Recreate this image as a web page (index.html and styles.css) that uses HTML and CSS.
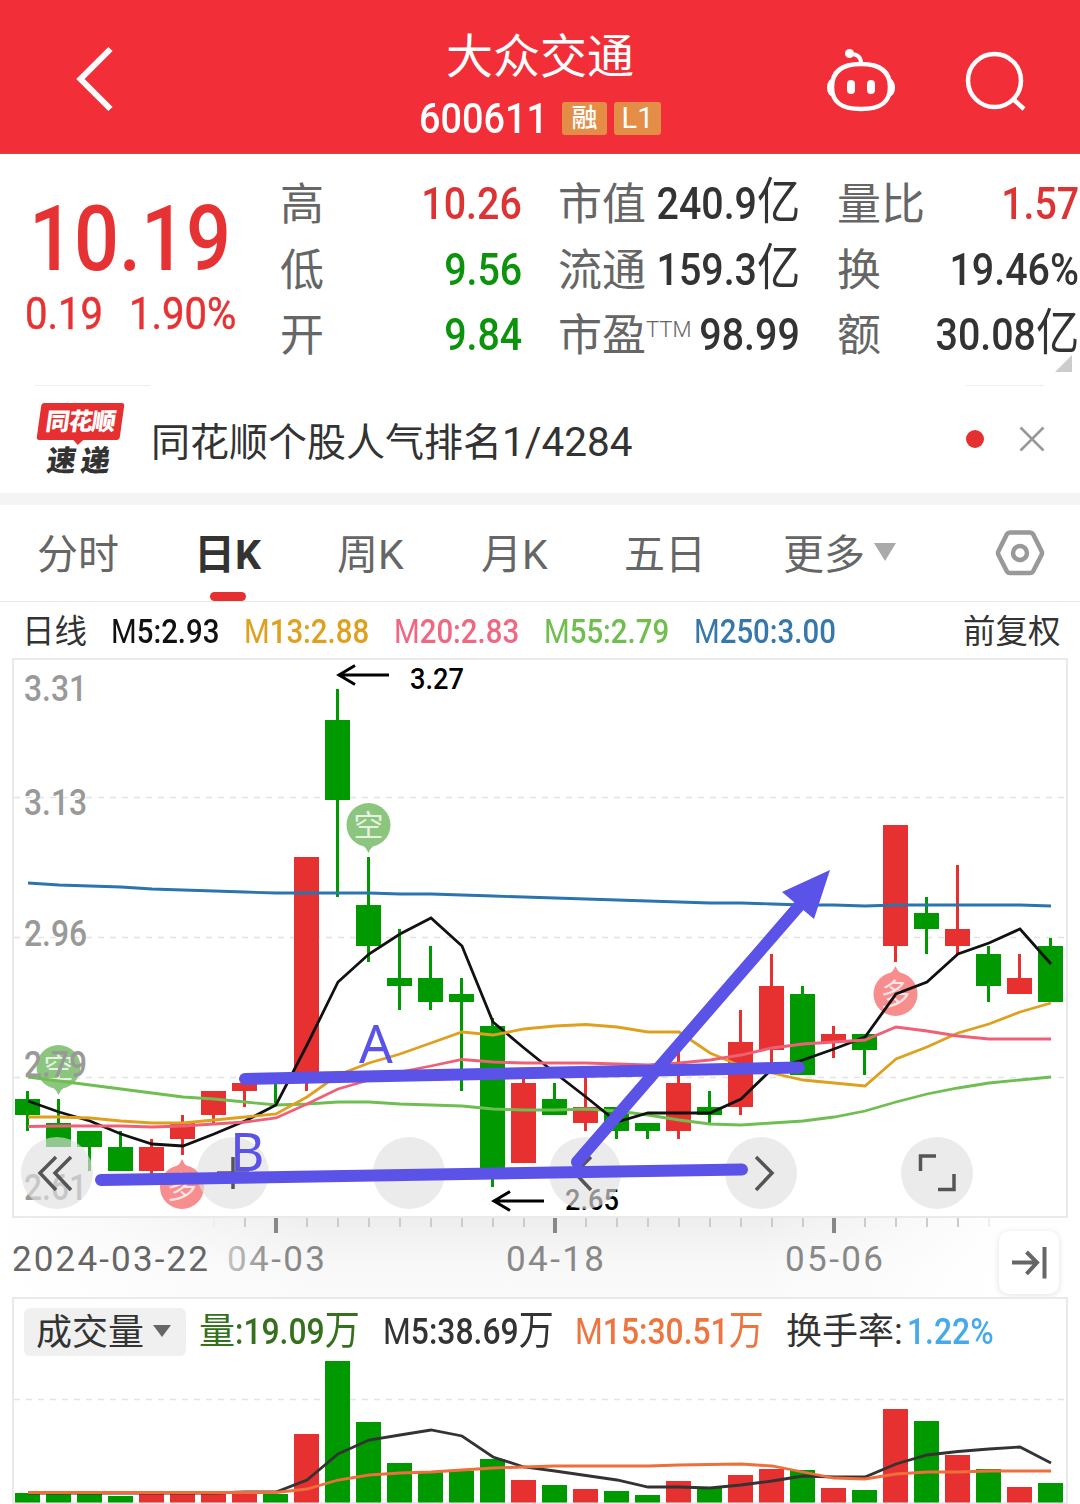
FILE: index.html
```
<!DOCTYPE html>
<html lang="zh-CN">
<head>
    <meta charset="utf-8" />
    <title>大众交通 600611</title>
    <meta name="viewport" content="width=1080">
    <link rel="stylesheet" href="styles.css">
</head>
<body>

<div class="main">
    <header class="header">
        <svg class="back" width="48" height="76" viewBox="70 40 48 76">
            <path d="M110.500 49L80.500 79L110.500 109" fill="none" stroke="#fff" stroke-width="6"/>
        </svg>
        <div class="header-title">
            <h1>大众交通</h1>
            <div class="header-code">
                <span class="code"><span class="num">600611</span></span>
                <span class="tag">融</span>
                <span class="tag tag-l1">L1</span>
            </div>
        </div>
        <div class="header-icons">
            <svg width="72" height="66" viewBox="825 47 72 66">
                <g fill="none" stroke="#fff" stroke-width="4.5">
                    <path d="M861 64C881 64 890 72 890 87C890 103 880 109 861 109C842 109 832 103 832 87C832 72 841 64 861 64Z"/>
                    <path d="M861 63C861 57 857 54 851 54" stroke-width="4"/>
                </g>
                <circle cx="849.500" cy="53.500" r="4.500" fill="#fff"/>
                <path d="M833 78Q827 80 827 87.500T833 97ZM889 78Q895 80 895 87.500T889 97Z" fill="#fff"/>
                <rect x="847" y="80" width="8" height="14" rx="4" fill="#fff"/>
                <rect x="867" y="80" width="8" height="14" rx="4" fill="#fff"/>
            </svg>
            <svg width="64" height="64" viewBox="963 49 64 64">
                <g fill="none" stroke="#fff" stroke-width="4.500">
                    <circle cx="994.500" cy="80.500" r="26.500"/>
                    <path d="M1013 99L1024 109"/>
                </g>
            </svg>
        </div>
    </header>

    <section class="quote">
        <div class="quote-price">
            <div class="price"><span class="num">10.19</span></div>
            <div class="change">
                <span class="num">0.19</span>
                <span class="num">1.90%</span>
            </div>
        </div>
        <div class="quote-grid">
            <span class="label">高</span><span class="value red"><span class="num">10.26</span></span>
            <span class="label">市值</span><span class="value"><span class="num">240.9<i class="unit">亿</i></span></span>
            <span class="label">量比</span><span class="value red"><span class="num">1.57</span></span>

            <span class="label">低</span><span class="value green"><span class="num">9.56</span></span>
            <span class="label">流通</span><span class="value"><span class="num">159.3<i class="unit">亿</i></span></span>
            <span class="label">换</span><span class="value"><span class="num">19.46%</span></span>

            <span class="label">开</span><span class="value green"><span class="num">9.84</span></span>
            <span class="label">市盈<sup>TTM</sup></span><span class="value"><span class="num">98.99</span></span>
            <span class="label">额</span><span class="value"><span class="num">30.08<i class="unit">亿</i></span></span>
        </div>
        <div class="corner"></div>
    </section>

    <section class="news">
        <div class="news-logo">
            <div class="logo-top">同花顺</div>
            <div class="logo-bottom">速递</div>
        </div>
        <div class="news-text">同花顺个股人气排名<span class="rank">1/4284</span></div>
        <div class="dot"></div>
        <svg class="close" width="26" height="26" viewBox="0 0 26 26">
            <path d="M1.500 1.500L24.500 24.500M24.500 1.500L1.500 24.500" stroke="#999" stroke-width="2.600"/>
        </svg>
    </section>

    <nav class="tabs">
        <span>分时</span>
        <span class="active">日K</span>
        <span>周K</span>
        <span>月K</span>
        <span>五日</span>
        <span class="more">更多</span>
        <svg width="52" height="50" viewBox="994 528 52 50" fill="none" stroke="#999" stroke-width="4.500">
            <path d="M1010 532.500H1030Q1032 532.500 1033 534L1041.500 551Q1042.500 553 1041.500 555L1033 571.500Q1032 573 1030 573H1010Q1008 573 1007 571.500L998.500 555Q997.500 553 998.500 551L1007 534Q1008 532.500 1010 532.500Z"/>
            <circle cx="1020" cy="553" r="7"/>
        </svg>
    </nav>

    <div class="ma-row">
        <span class="cn">日线</span>
        <span class="num c-black"><i>M</i>5:2.93</span>
        <span class="num c-gold"><i>M</i>13:2.88</span>
        <span class="num c-pink"><i>M</i>20:2.83</span>
        <span class="num c-lime"><i>M</i>55:2.79</span>
        <span class="num c-blue"><i>M</i>250:3.00</span>
        <span class="cn right">前复权</span>
    </div>

    <svg class="chart" width="1080" height="640" viewBox="0 657 1080 640">
        <defs>
            <linearGradient id="fadeY" x1="0" y1="0" x2="0" y2="1">
                <stop offset="0" stop-color="#eee"/>
                <stop offset="0.6" stop-color="#f8f8f8"/>
                <stop offset="1" stop-color="#fafafa"/>
            </linearGradient>
            <linearGradient id="fadeX" x1="0" y1="0" x2="1" y2="0">
                <stop offset="0" stop-color="#fff"/>
                <stop offset="0.3" stop-color="#fff" stop-opacity="0"/>
                <stop offset="0.7" stop-color="#fff" stop-opacity="0"/>
                <stop offset="0.93" stop-color="#fff"/>
            </linearGradient>
            <linearGradient id="dateFade" x1="0" y1="0" x2="1" y2="0">
                <stop offset="0" stop-color="#c4c4c4"/>
                <stop offset="0.5" stop-color="#888"/>
            </linearGradient>
        </defs>
        <rect x="0" y="1218" width="1080" height="79" fill="url(#fadeY)"/>
        <rect x="0" y="1218" width="1080" height="79" fill="url(#fadeX)"/>
        <rect x="13" y="659" width="1054" height="558" fill="#fff" stroke="#eaeaea" stroke-width="2"/>
        <path class="grid" d="M14 797.500H1066M14 937.500H1066M14 1077.500H1066"/>
        <g id="candles"></g>
        <g id="pins"></g>
        <g id="lines"></g>
        <g class="axis">
            <text x="24" y="701" textLength="63" lengthAdjust="spacingAndGlyphs">3.31</text>
            <text x="24" y="815" textLength="63" lengthAdjust="spacingAndGlyphs">3.13</text>
            <text x="24" y="946" textLength="63" lengthAdjust="spacingAndGlyphs">2.96</text>
            <text x="24" y="1077" textLength="63" lengthAdjust="spacingAndGlyphs">2.79</text>
            <text x="24" y="1200" textLength="63" lengthAdjust="spacingAndGlyphs">2.61</text>
        </g>
        <g class="mark">
            <path d="M389 675H339M355 665.500L339 675L355 684.500"/>
            <text x="410" y="689" textLength="54" lengthAdjust="spacingAndGlyphs">3.27</text>
            <path d="M544 1201H494M510 1191.500L494 1201L510 1210.500"/>
            <text x="565" y="1210" textLength="54" lengthAdjust="spacingAndGlyphs">2.65</text>
        </g>
        <g class="tools">
            <circle cx="57" cy="1173" r="36"/>
            <circle cx="233" cy="1173" r="36"/>
            <circle cx="409" cy="1173" r="36"/>
            <circle cx="585" cy="1173" r="36"/>
            <circle cx="761" cy="1173" r="36"/>
            <circle cx="937" cy="1173" r="36"/>
            <path d="M56 1157L40 1173L56 1190M71 1157L55 1173L71 1190"/>
            <path d="M217 1173H249M233 1157V1189"/>
            <path d="M393 1174H425"/>
            <path d="M591 1157L575 1173L591 1190"/>
            <path d="M756 1157L772 1173L756 1190"/>
            <path d="M920.500 1171V1156H936M954 1174V1189.500H938"/>
        </g>
        <g class="draw">
            <path d="M245 1079L799 1067.500M101 1180L742 1169.500M577 1162L805 899"/>
            <path class="head" d="M830 870L782 892L814 919Z"/>
            <text x="359" y="1063">A</text>
            <text x="230" y="1171">B</text>
        </g>
        <g id="ticks"></g>
        <g class="dates">
            <text x="12" y="1271" textLength="196" fill="#666">2024-03-22</text>
            <text x="227" y="1271" textLength="98" fill="url(#dateFade)">04-03</text>
            <text x="506" y="1271" textLength="98">04-18</text>
            <text x="785" y="1271" textLength="98">05-06</text>
        </g>
        <g class="to-end">
            <rect x="999" y="1231" width="60" height="63" rx="10"/>
            <path d="M1012 1262.500H1037M1026.500 1252L1037 1262.500L1026.500 1274M1044.500 1247V1278.500"/>
        </g>
    </svg>

    <section class="volume">
        <div class="volume-head">
            <span class="pill">成交量</span>
            <span class="v-item v-green"><i>量</i><span class="num">:19.09<i class="unit">万</i></span></span>
            <span class="num v-item"><i>M</i>5:38.69<i class="unit">万</i></span>
            <span class="num v-item v-orange"><i>M</i>15:30.51<i class="unit">万</i></span>
            <span class="v-item"><i>换手率</i>:</span>
            <span class="num v-item v-sky">1.22%</span>
        </div>
        <svg width="1052" height="144" viewBox="14 1360 1052 144">
            <path class="grid" d="M14 1399.500H1066"/>
            <path d="M14 1503H1066" stroke="#eaeaea" stroke-width="2"/>
            <g id="volumes"></g>
        </svg>
    </section>
</div>

<script>
    var RED = '#e73030', GREEN = '#009900';
    var STEP = 31, START = 27.5;

    // [方向, 最高, 实体上沿, 实体下沿, 最低, 成交量顶部]
    var days = [
        ['g', 1091, 1099, 1115, 1131, 1493], ['g', 1099, 1123, 1147, 1147, 1494],
        ['g', 1131, 1131, 1147, 1171, 1494], ['g', 1131, 1147, 1171, 1171, 1496],
        ['r', 1139, 1147, 1171, 1175, 1494], ['r', 1115, 1123, 1139, 1155, 1494],
        ['r', 1091, 1091, 1115, 1123, 1494], ['r', 1083, 1083, 1091, 1107, 1494],
        ['g', 1075, 1075, 1083, 1105, 1494], ['r', 857, 857, 1072, 1091, 1434],
        ['g', 689, 720, 800, 897, 1361], ['g', 857, 905, 946, 962, 1422],
        ['g', 929, 978, 986, 1010, 1463], ['g', 946, 978, 1002, 1010, 1472],
        ['g', 978, 994, 1002, 1091, 1471], ['g', 1018, 1026, 1170, 1187, 1459],
        ['r', 1078, 1083, 1163, 1163, 1480], ['g', 1083, 1099, 1115, 1115, 1485],
        ['r', 1075, 1107, 1123, 1131, 1489], ['g', 1107, 1107, 1131, 1139, 1491],
        ['g', 1123, 1123, 1131, 1139, 1495], ['r', 1050, 1083, 1131, 1139, 1481],
        ['g', 1091, 1107, 1115, 1123, 1488], ['r', 1010, 1042, 1107, 1115, 1475],
        ['r', 954, 986, 1050, 1065, 1469], ['g', 986, 994, 1075, 1075, 1470],
        ['r', 1026, 1034, 1042, 1058, 1488], ['g', 1034, 1034, 1050, 1075, 1490],
        ['r', 825, 825, 946, 962, 1409], ['g', 897, 913, 929, 954, 1421],
        ['r', 865, 929, 946, 954, 1455], ['g', 946, 954, 986, 1002, 1469],
        ['r', 954, 978, 994, 994, 1487], ['g', 938, 946, 1002, 1002, 1483]
    ];

    var averages = {
        '#2b74ad': [883, 885, 886, 887, 889, 890, 891, 892, 893, 893, 893, 893, 894, 894, 895, 896, 897, 898, 899, 900, 901, 902, 903, 903, 904, 905, 905, 906, 905, 905, 905, 905, 905, 906],
        '#6fbe52': [1077, 1081, 1085, 1089, 1093, 1097, 1099, 1102, 1105, 1104, 1102, 1102, 1104, 1105, 1106, 1109, 1110, 1110, 1109, 1111, 1115, 1120, 1124, 1125, 1123, 1121, 1117, 1111, 1102, 1094, 1088, 1083, 1080, 1077],
        '#111': [1101, 1112, 1121, 1134, 1144, 1146, 1134, 1121, 1105, 1045, 982, 954, 934, 918, 946, 1022, 1048, 1073, 1097, 1122, 1113, 1113, 1113, 1099, 1069, 1060, 1049, 1037, 994, 982, 954, 943, 929, 964],
        '#dfa01e': [1117, 1117, 1118, 1121, 1123, 1123, 1120, 1117, 1114, 1097, 1075, 1063, 1054, 1043, 1032, 1035, 1029, 1026, 1024.5, 1027, 1032, 1032, 1053, 1066, 1073, 1080, 1083, 1086, 1059, 1047, 1033, 1024, 1012, 1003],
        '#ef6077': [1126.5, 1126, 1126, 1126, 1127, 1126, 1124, 1122, 1118, 1104, 1089, 1080, 1072, 1066, 1059.5, 1062, 1063, 1063, 1063, 1064, 1065, 1063, 1060, 1055, 1048, 1044, 1042, 1040, 1027, 1031, 1036, 1039, 1039, 1039]
    };

    var volumeAverages = {
        '#333': [1493, 1493, 1493, 1493, 1493, 1493, 1493, 1492, 1492, 1480, 1454, 1440, 1435, 1430, 1436, 1457, 1467, 1471, 1475.5, 1480, 1487, 1487, 1488, 1485, 1481, 1476, 1477, 1477, 1464, 1455, 1451.5, 1449, 1447, 1463],
        '#ee6f3c': [1492.5, 1492.5, 1492.5, 1492.5, 1492.5, 1492.5, 1492.5, 1492.5, 1492.5, 1489, 1480, 1475, 1473, 1472, 1470, 1468, 1467, 1466, 1466, 1466, 1466, 1465, 1464.5, 1464, 1466, 1472, 1478, 1479, 1474, 1472, 1472, 1471, 1471, 1471]
    };

    function rect(x, y, w, h, color) {
        return '<rect x="' + x + '" y="' + y + '" width="' + w + '" height="' + h + '" fill="' + color + '"/>';
    }

    function polylines(series) {
        return Object.keys(series).map(function(color) {
            var points = series[color].map(function(y, i) {
                return (START + i * STEP + 0.5) + ',' + y;
            }).join(' ');
            return '<polyline points="' + points + '" fill="none" stroke="' + color + '" stroke-width="2.8"/>';
        }).join('');
    }

    // 多空标记，dir 为 1 时尖角朝下
    function pin(x, y, dir, text, color, rotate) {
        return '<g transform="translate(' + x + ' ' + y + ')">' +
            '<circle r="22" fill="' + color + '"/>' +
            '<path d="M-12 ' + 17 * dir + 'Q-3 ' + 20 * dir + ' 0 ' + 28 * dir + 'Q3 ' + 20 * dir + ' 12 ' + 17 * dir + 'Z" fill="' + color + '"/>' +
            '<text class="pin-text" y="11" transform="rotate(' + rotate + ')">' + text + '</text></g>';
    }

    var candles = '', volumes = '', ticks = '';
    days.forEach(function(d, i) {
        var x = START + i * STEP;
        var color = d[0] === 'r' ? RED : GREEN;
        candles += rect(x - 1.5, d[1], 3, d[4] - d[1], color) + rect(x - 12.5, d[2], 25, d[3] - d[2], color);
        volumes += rect(x - 12.5, d[5], 25, 1502.5 - d[5], color);
        if (i > 5 && i < 32) {
            var major = i === 8 || i === 17 || i === 26;
            ticks += major ? rect(x - 1.5, 1218, 4, 15, '#888') : rect(x - 0.5, 1218, 2, 9, i === 6 || i === 31 ? '#eee' : '#ccc');
        }
    });

    document.getElementById('candles').innerHTML = candles;
    document.getElementById('lines').innerHTML = polylines(averages);
    document.getElementById('volumes').innerHTML = volumes + polylines(volumeAverages);
    document.getElementById('ticks').innerHTML = ticks;
    document.getElementById('pins').innerHTML =
        pin(58.5, 1067, 1, '空', '#8cc67e', 0) +
        pin(368.5, 825, 1, '空', '#8cc67e', 0) +
        pin(182, 1187, -1, '多', '#f78d8d', 0) +
        pin(895.5, 994, -1, '多', '#f78d8d', 0);
</script>

</body>
</html>
```
FILE: styles.css
```
* {
    box-sizing: border-box;
}
body, html {
    margin: 0;
    padding: 0;
    background: #fff;
    overflow: hidden;
    font-family: Roboto, "Noto Sans CJK SC", sans-serif;
    color: #333;
}
i {
    font-style: normal;
    font-weight: 400;
}
svg {
    display: block;
}
.main {
    width: 1080px;
    height: 1504px;
    overflow: hidden;
}
/* 数字统一收窄 */
.num {
    display: inline-block;
    font-weight: 500;
    white-space: nowrap;
    transform: scaleX(0.875);
    transform-origin: left center;
}
.unit {
    font-size: 1.1em;
    line-height: 0;
}

/* 顶部 */
.header {
    display: grid;
    grid-template-columns: 300px 1fr 300px;
    height: 154px;
    background: #f22f38;
    color: #fff;
    border-bottom: 1px solid #d8454c;
}
.back {
    margin: 40px 0 0 70px;
}
.header-title {
    padding-top: 29px;
}
.header-title h1 {
    margin: 0;
    font-size: 47px;
    line-height: 56px;
    font-weight: 400;
    text-align: center;
}
.header-code {
    display: flex;
    align-items: center;
    height: 66px;
    padding-left: 119px;
}
.code {
    width: 143px;
    font-size: 42px;
}
.code .num {
    transform: scaleX(0.9);
}
.tag {
    width: 45px;
    height: 33px;
    margin-right: 7px;
    border-radius: 3px;
    background: #e48d47;
    font-size: 26px;
    line-height: 33px;
    font-weight: 500;
    text-align: center;
}
.tag-l1 {
    width: 47px;
    font-size: 29px;
    font-weight: 400;
}
.header-icons {
    display: flex;
    gap: 66px;
    padding: 47px 0 0 45px;
}
.header-icons svg + svg {
    margin-top: 2px;
}

/* 行情 */
.quote {
    position: relative;
    display: flex;
    height: 231px;
}
.quote-price {
    flex: none;
    width: 281px;
    padding: 33px 0 0 25px;
    color: #e63232;
}
.price {
    height: 104px;
    padding-left: 4px;
    font-size: 90px;
    line-height: 106px;
}
.price .num {
    transform: scaleX(0.88);
}
.change {
    display: grid;
    grid-template-columns: 104px 1fr;
    font-size: 45px;
    line-height: 46px;
}
.change .num {
    font-weight: 400;
    transform: scaleX(0.89);
    -webkit-text-stroke: 0.5px;
}
.quote-grid {
    display: grid;
    flex: none;
    grid-template-columns: 100px 142px 148px 130px 140px 139px;
    grid-template-rows: repeat(3, 65.5px);
    padding-top: 17px;
    margin-left: -1px;
    font-size: 44px;
    line-height: 65px;
}
.quote-grid > :nth-child(6n + 3) {
    margin-left: 36px;
}
.quote-grid > :nth-child(6n + 5) {
    margin-left: 37px;
}
.label {
    padding-top: 2px;
    color: #666;
    white-space: nowrap;
}
.label sup {
    font-size: 22px;
    line-height: 0;
    vertical-align: 14px;
    font-weight: 300;
}
.value {
    display: flex;
    justify-content: flex-end;
}
.value .num {
    font-size: 45px;
    transform-origin: right center;
}
.red {
    color: #dc3434;
}
.green {
    color: #0b930b;
}
.corner {
    position: absolute;
    right: 8px;
    top: 201px;
    border-left: 17px solid transparent;
    border-bottom: 17px solid #ccc;
}

/* 速递 */
.news {
    display: flex;
    align-items: center;
    height: 120px;
    padding: 0 35px 0 36px;
    border-bottom: 12px solid #f4f4f4;
    background:
        linear-gradient(#eee, #eee) 35px 0 / 115px 1px no-repeat,
        linear-gradient(#eee, #eee) 966px 0 / 78px 1px no-repeat;
}
.news-logo {
    width: 115px;
    height: 72px;
    font-weight: 900;
}
.logo-top {
    position: relative;
    width: 83px;
    height: 37px;
    margin-left: 3px;
    border-radius: 3px;
    background: #e62f31;
    color: #fff;
    font-size: 24px;
    line-height: 39px;
    letter-spacing: -1px;
    text-align: center;
    transform: skewX(-8deg);
}
.logo-top::after {
    content: "";
    position: absolute;
    left: 36px;
    top: 36px;
    border: 6px solid transparent;
    border-top-color: #e62f31;
    border-bottom: 0;
}
.logo-bottom {
    padding-left: 11px;
    font-size: 29px;
    line-height: 43px;
    letter-spacing: 5px;
    transform: skewX(-8deg);
}
.news-text {
    flex: 1;
    font-size: 39px;
    white-space: nowrap;
}
.rank {
    font-size: 40.5px;
}
.dot {
    width: 18px;
    height: 18px;
    margin-right: 35px;
    border-radius: 50%;
    background: #e62f31;
}

/* 周期切换 */
.tabs {
    display: grid;
    grid-template-columns: 157px 143px 144px 143px 159px 211px 60px;
    height: 97px;
    padding-left: 37px;
    border-bottom: 1px solid #e6e6e6;
    font-size: 41px;
    line-height: 101px;
    color: #666;
}
.tabs svg {
    margin-top: 23px;
}
.active {
    position: relative;
    height: 96px;
    color: #333;
    font-weight: 700;
}
.active::after {
    content: "";
    position: absolute;
    left: 16px;
    bottom: 0;
    width: 36px;
    height: 9px;
    border-radius: 5px;
    background: #e62f31;
}
.more::after {
    content: "";
    display: inline-block;
    margin-left: 9px;
    vertical-align: 8px;
    border: 11px solid transparent;
    border-top: 18px solid #aaa;
    border-bottom: 0;
}

/* 均线 */
.ma-row {
    display: grid;
    grid-template-columns: 89px 133px 150px 150px 150px 269px 100px;
    height: 55px;
    padding-left: 22px;
    font-size: 34px;
    line-height: 59px;
}
.ma-row .num {
    transform: scaleX(0.865);
}
.ma-row .cn {
    padding-top: 1px;
    font-size: 32.5px;
}
.c-black { color: #111; }
.c-gold { color: #dfa01e; }
.c-pink { color: #ef6780; }
.c-lime { color: #6fbe4e; }
.c-blue { color: #3778ab; }

/* K线图 */
.grid {
    stroke: #e4e4e4;
    stroke-width: 1.5;
    stroke-dasharray: 6 6;
}
.axis text {
    font-size: 36px;
    font-weight: 500;
    fill: #999;
}
.mark path {
    fill: none;
    stroke: #000;
    stroke-width: 3;
}
.mark text {
    font-size: 29px;
    font-weight: 500;
    fill: #000;
}
.pin-text {
    font-size: 30px;
    fill: #fff;
    fill-opacity: 0.8;
    text-anchor: middle;
}
.tools circle {
    fill: #e0e0e0;
    fill-opacity: 0.65;
}
.tools path {
    fill: none;
    stroke: #555;
    stroke-width: 3.5;
}
.draw path {
    fill: none;
    stroke: #5b53e8;
    stroke-width: 12;
    stroke-linecap: round;
}
.draw .head {
    fill: #5b53e8;
    stroke: none;
}
.draw text {
    font-family: "Noto Sans", sans-serif;
    font-size: 53px;
    fill: #5b53e8;
}
.dates text {
    font-size: 35px;
}
.dates {
    fill: #888;
    font-weight: 400;
}
.to-end rect {
    fill: #fff;
    filter: drop-shadow(0 1px 3px rgba(0, 0, 0, 0.12));
}
.to-end path {
    fill: none;
    stroke: #666;
    stroke-width: 4;
}

/* 成交量 */
.volume {
    width: 1056px;
    margin-left: 12px;
    border: 2px solid #eaeaea;
    border-bottom: 0;
}
.volume-head {
    display: grid;
    grid-template-columns: 175px 184px 192px 211px 121px 100px;
    height: 61px;
    padding: 9px 0 0 10px;
    font-size: 36px;
    line-height: 48px;
}
.pill {
    width: 162px;
    height: 48px;
    padding-left: 12px;
    border-radius: 6px;
    background: #f0f0f0;
    line-height: 50px;
}
.pill::after {
    content: "";
    display: inline-block;
    margin-left: 9px;
    vertical-align: 8px;
    border: 9px solid transparent;
    border-top: 12px solid #666;
    border-bottom: 0;
}
.v-item {
    white-space: nowrap;
}
.volume-head .num {
    transform: scaleX(0.885);
}
.v-green { color: #35701c; }
.v-orange { color: #ee7440; }
.v-sky { color: #45aaec; }
```
